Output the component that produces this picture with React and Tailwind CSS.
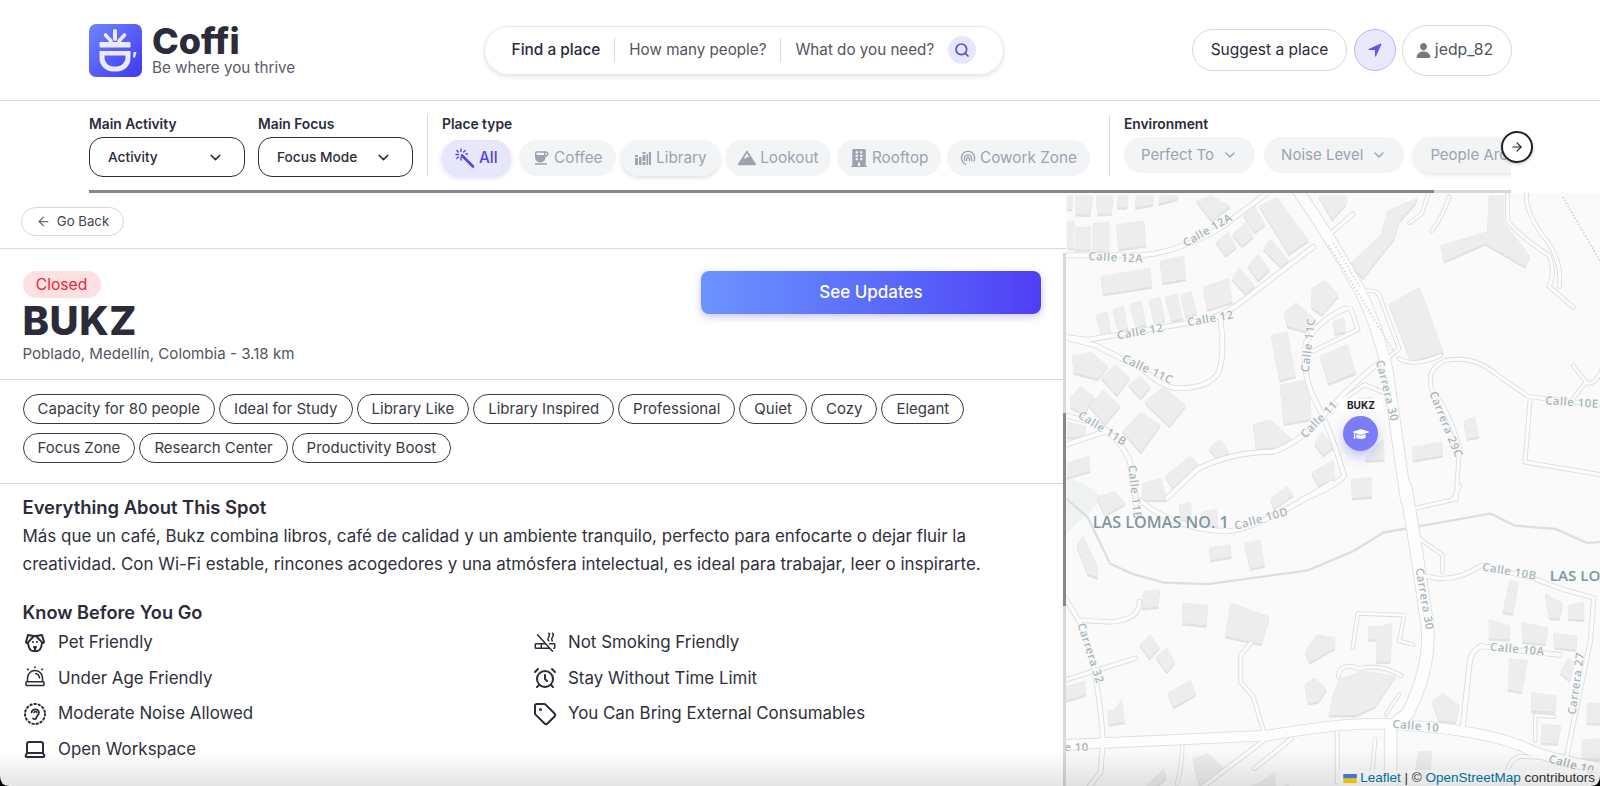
import React from 'react';
import { ChevronDown, ArrowRight, ArrowLeft, Search, Tag, AlarmClock, Laptop } from 'lucide-react';
import { IoNavigate, IoPerson } from 'react-icons/io5';
import { FaGraduationCap, FaBuilding, FaMountain } from 'react-icons/fa';
import { MdCoffee } from 'react-icons/md';
import { TbDog } from 'react-icons/tb';
import { PiSiren, PiCigaretteSlash } from 'react-icons/pi';

const tags = [
  ['Capacity for 80 people', 'Ideal for Study', 'Library Like', 'Library Inspired', 'Professional', 'Quiet', 'Cozy', 'Elegant'],
  ['Focus Zone', 'Research Center', 'Productivity Boost'],
];

// map geometry, in units of 2.904 per page pixel (see the viewBox). The second sets sit 859.6 lower.
const bldA = [
  '20,15 38,15 35,55 20,55', '45,15 95,15 88,72 45,70', '105,15 155,15 150,68 108,70', '168,15 198,15 195,50 165,50',
  '220,15 272,15 270,42 218,50', '288,15 345,15 340,25 285,40', '395,30 440,15 495,45 440,88', '20,90 42,88 40,170 20,165',
  '45,108 90,105 88,172 42,172', '95,95 143,92 143,175 92,178', '163,100 245,88 250,160 170,172', '290,205 360,190 366,258 298,270',
  '118,250 262,225 268,280 125,302', '452,150 490,122 513,165 480,190', '500,128 540,92 562,135 528,162', '532,70 565,45 596,100 565,122',
  '578,45 630,20 722,145 665,185', '590,170 610,140 665,205 640,222', '545,220 575,185 610,230 575,262', '498,258 520,225 566,275 540,302',
  '415,280 490,255 502,325 428,347', '350,305 382,292 398,358 365,368', '305,310 340,300 358,372 325,380', '258,318 292,310 305,378 275,388',
  '203,330 238,320 250,390 222,398', '153,345 185,335 198,400 170,410', '105,360 138,352 150,415 120,420', '750,15 835,15 830,40 790,85',
  '840,215 930,130 950,60 1040,20 1030,40 985,90 970,140 880,255', '1105,160 1240,120 1245,15 1290,15 1290,95 1365,190 1350,222 1235,155 1115,207',
  '955,330 1045,282 1115,470 1020,498', '730,285 770,260 810,305 760,362 730,340', '650,355 685,325 738,372 715,410 660,395',
  '792,380 825,370 830,410 798,418', '755,480 835,448 860,530 780,562', '612,420 660,410 685,540 638,552', '638,565 725,548 730,665 650,678',
  '35,480 90,470 140,510 110,548 40,530', '120,545 160,505 203,545 165,595', '198,565 232,538 262,570 235,605', '30,600 60,570 100,600 70,650 30,630',
  '85,625 125,580 175,625 130,680', '245,615 300,570 365,625 318,685', '180,700 235,645 292,680 235,760', '20,670 75,685 75,715 20,718',
  '20,790 85,772 88,815 20,835', '432,750 465,722 492,760 462,785', '560,680 610,665 672,720 655,745 570,752', '738,735 760,700 795,745 765,770',
  '730,820 795,782 800,840 750,858', '845,840 905,832 905,890 848,895', '305,830 378,770 405,800 330,868', '238,850 295,835 310,900 240,900',
  '1022,745 1110,730 1112,770 1025,785', '1172,670 1205,658 1218,715 1182,722', '865,605 905,600 905,630 865,632', '885,780 940,720 942,782 890,785',
];

const bldB = [
  '105,30 160,15 190,50 130,85', '345,55 380,45 385,100 350,100', '410,75 455,65 460,120 420,120', '610,35 660,0 678,25 620,65',
  '433,178 495,168 498,205 436,215', '535,165 582,155 595,230 552,240', '48,170 68,145 108,230 110,265 80,255', '240,305 290,298 285,350 238,355',
  '355,338 430,345 425,405 355,398', '495,338 608,378 585,458 478,435', '230,460 262,432 290,468 260,500', '278,495 310,468 335,510 310,540',
  '312,600 380,562 395,605 330,642', '18,580 72,565 76,605 18,622', '138,650 155,650 180,618 188,685 140,692', '712,480 745,430 800,440 798,470 725,512',
  '895,408 935,405 965,398 960,510 918,510 918,445 895,445', '710,575 740,555 775,590 750,625 720,630', '780,665 790,610 810,560 880,535 975,550 915,640 860,665',
  '1285,365 1305,272 1332,278 1315,370', '1408,310 1460,340 1450,385 1420,382', '1475,345 1522,335 1522,388 1475,385', '1245,385 1308,405 1305,445 1245,442',
  '1340,395 1418,410 1410,458 1342,452', '1432,425 1502,435 1498,475 1435,468', '1305,500 1358,505 1340,598 1300,590', '1452,540 1475,498 1495,510 1480,565',
  '1368,598 1442,608 1438,655 1368,652', '1398,690 1455,695 1445,748 1395,745', '1080,625 1110,600 1160,635 1150,685 1100,680', '1530,630 1620,628 1620,690 1530,688',
  '1515,735 1620,730 1620,795 1515,790', '1040,770 1080,768 1075,838 1030,835', '385,790 430,775 478,820 405,872', '240,880 300,820 310,845 250,900',
  '535,880 580,860 625,830 625,900 535,900', '655,860 685,890 685,900 655,900', '825,830 875,835 870,860 825,860',
];

const roadA = [
  ['M0 190 L230 190 Q300 185 360 160 Q430 135 480 100 L600 10', 12],
  ['M0 425 L80 435 L380 385 Q460 375 520 330 L735 165', 12],
  ['M465 370 Q480 480 460 530 Q430 580 330 575 Q280 560 240 520 L100 450 L0 425', 12],
  ['M0 650 L110 680 Q170 720 200 780 Q215 830 220 910', 12],
  ['M0 745 L135 700', 12],
  ['M850 70 L770 140', 10],
  ['M830 345 Q760 370 715 440 Q700 500 730 590 Q790 700 825 830 Q800 860 700 900', 12],
  ['M915 510 Q820 590 760 660 Q700 730 620 760 Q500 760 400 810 L310 895', 12],
  ['M730 470 L865 405', 9],
  ['M820 345 L845 345 L865 405', 9],
  ['M820 610 L885 565 L945 590', 9],
  ['M985 490 Q1030 515 1105 480', 9],
  ['M1150 900 L1160 750 Q1130 640 1080 580 Q1060 520 1120 495 Q1200 480 1260 530 L1360 600 L1620 630', 9],
  ['M1365 610 L1350 790 L1620 835', 9],
  ['M1300 0 L1300 90 Q1330 130 1420 190 Q1440 240 1420 280 L1490 340', 9],
  ['M1355 10 Q1350 60 1400 130 Q1460 200 1450 280', 9],
  ['M1490 510 L1530 560 Q1560 570 1580 500', 8],
  ['M1525 560 L1480 620', 8],
  ['M1070 10 L1050 70 L1015 95', 8],
  ['M1130 20 Q1110 80 1080 118', 8],
  ['M870 300 Q900 285 925 300 L985 460 L950 490', 8],
];

const roadB = [
  ['M230 40 L270 70 Q380 135 500 130 Q600 110 790 -10', 12],
  ['M1030 65 L1140 40 L1160 0', 9],
  ['M1040 150 L1110 200 L1110 250', 8],
  ['M1065 262 Q1140 285 1225 230 L1380 270 L1460 300 L1550 325 L1540 450 L1470 790', 10],
  ['M1450 490 L1220 465 Q1195 480 1190 510 L1170 695', 12],
  ['M0 300 L60 400 Q110 520 125 740 L118 830 L80 880', 11],
  ['M0 568 L220 500', 10],
  ['M590 708 L560 610 L525 570 L525 490 L555 455', 9],
  ['M670 735 L565 820', 10],
  ['M590 740 L400 885', 10],
  ['M355 755 Q355 810 340 865', 8],
  ['M805 715 L805 860', 9],
  ['M1380 740 L1380 665 L1435 670', 8],
  ['M915 735 L905 850', 8],
  ['M850 470 L865 370 L1000 375 L985 450 L1025 460', 8],
  ['M990 550 Q930 515 870 530 Q810 510 808 555', 9],
  ['M230 335 Q235 385 150 395 L60 390', 10],
  ['M1290 900 Q1290 790 1340 785 L1450 790', 9],
  ['M945 665 L985 605', 6],
];

const mainA = [['M690 0 Q780 130 870 290 Q920 390 950 520 L1005 900', 30]];
const mainB = [
  ['M1003 0 Q1030 150 1060 360 Q1090 500 1010 660 L960 700 L960 900', 34],
  ['M0 752 L600 725 Q800 690 920 690 Q1200 700 1340 755 Q1430 800 1620 825', 28],
];

const labelsA = [
  ['Calle 12A', 82, 203, 3], ['Calle 12A', 365, 166, -30], ['Calle 12', 168, 434, -10], ['Calle 12', 372, 396, -10],
  ['Calle 11C', 178, 497, 25], ['Calle 11C', 722, 530, -83], ['Carrera 30', 917, 497, 76], ['Carrera 29C', 1072, 590, 68],
  ['Calle 10E', 1408, 622, 4], ['Calle 11B', 50, 660, 32], ['Calle 11', 712, 722, -45], ['Calle 11B', 198, 800, 84],
];

const labelsB = [
  ['Calle 10D', 510, 128, -16], ['Carrera 30', 1032, 240, 80], ['Calle 10B', 1225, 245, 10], ['Carrera 32', 50, 402, 72],
  ['Calle 10A', 1248, 478, 5], ['Carrera 27', 1497, 665, -82], ['Calle 10', 965, 702, 5], ['Calle 10', -52, 770, 0], ['Calle 10', 1417, 802, 15],
];

const MapDrawing = () => {
  const polys = (list) => list.map((p) => (
    <g key={p}>
      <polygon points={p} fill="#e2e2e2" transform="translate(0 7)" />
      <polygon points={p} fill="#ededed" />
    </g>
  ));
  const roads = (list, extra, color) => list.map((r) => (
    <path key={r[0]} d={r[0]} fill="none" stroke={color} strokeWidth={r[1] + extra} strokeLinejoin="round" strokeLinecap="round" />
  ));
  const labels = (list) => list.map(([t, x, y, a]) => (
    <text
      key={t + x}
      x={x}
      y={y}
      transform={`rotate(${a} ${x} ${y})`}
      fontSize="33"
      fontFamily="'Open Sans', sans-serif"
      fontWeight="600"
      letterSpacing="1.5"
      fill="#a9b6bd"
      stroke="#fafafa"
      strokeWidth="5"
      paintOrder="stroke"
    >
      {t}
    </text>
  ));

  return (
    <svg viewBox="17.400 8.700 1550.600 1722" className="block h-full w-full">
      <rect x="0" y="0" width="1620" height="1800" fill="#fafafa" />
      <path d="M18 830 L100 870 L120 900 L18 1000 Z" fill="#f0f4f0" />
      {polys(bldA)}
      <g transform="translate(0 859.600)">{polys(bldB)}</g>
      <g transform="translate(0 -28.400)">
        <path
          d="M18 925 L80 978 L145 1113 L210 1143 L300 1168 L430 1173 L720 1133 L850 1078 L940 1023 L1250 968 L1320 1003 L1440 1013 L1530 1053 L1620 1048"
          fill="none"
          stroke="#d8e2e4"
          strokeWidth="7"
          strokeLinejoin="round"
        />
      </g>
      {roads(roadA, 5, '#dddddd')}
      <g transform="translate(0 859.600)">{roads(roadB, 5, '#dddddd')}</g>
      {roads(mainA, 5, '#dddddd')}
      <g transform="translate(0 859.600)">{roads(mainB, 5, '#dddddd')}</g>
      {roads(roadA, 0, '#fcfcfc')}
      <g transform="translate(0 859.600)">{roads(roadB, 0, '#fcfcfc')}</g>
      {roads(mainA, 0, '#fdfdfd')}
      <g transform="translate(0 859.600)">{roads(mainB, 0, '#fdfdfd')}</g>
      <path d="M780 160 L970 470" fill="none" stroke="#cfcfcf" strokeWidth="4" strokeDasharray="4 7" />
      <path d="M795 155 L870 280" fill="none" stroke="#cfcfcf" strokeWidth="4" strokeDasharray="4 7" />
      <path d="M1460 20 L1570 210" fill="none" stroke="#cfcfcf" strokeWidth="5" strokeDasharray="4 6" />
      {labels(labelsA)}
      <g transform="translate(0 859.600)">
        {labels(labelsB)}
        <text x="95" y="122" fontSize="47" fontFamily="'Open Sans', sans-serif" fontWeight="600" fill="#82959f" stroke="#fafafa" strokeWidth="4" paintOrder="stroke">LAS LOMAS NO. 1</text>
        <text x="1422" y="277" fontSize="44" fontFamily="'Open Sans', sans-serif" fontWeight="600" fill="#82959f" stroke="#fafafa" strokeWidth="4" paintOrder="stroke">LAS LOMAS</text>
      </g>
    </svg>
  );
};

const CoffiLogo = () => (
  <svg viewBox="0 0 53 53" className="h-[53px] w-[53px] shrink-0">
    <defs>
      <linearGradient id="logoFill" x1="0" y1="0" x2="1" y2="1">
        <stop offset="0" stopColor="#6f86ff" />
        <stop offset="1" stopColor="#3f37f2" />
      </linearGradient>
    </defs>
    <rect width="53" height="53" rx="7" fill="url(#logoFill)" />
    <g stroke="#eceaff" strokeLinecap="round" fill="none">
      <path d="M26 7 V15" strokeWidth="4" />
      <path d="M16.500 11 L22 17" strokeWidth="3.600" />
      <path d="M35.500 11 L30 17" strokeWidth="3.600" />
    </g>
    <rect x="10.500" y="18" width="31" height="5.500" rx="1" fill="#eceaff" />
    <path
      fillRule="evenodd"
      d="M10.500 27 H41.500 V34 C41.500 42 35 47.500 28 47.500 H24 C17 47.500 10.500 42 10.500 34 Z M15.500 31.500 V33.500 C15.500 38.500 20 42.500 24 42.500 H28 C32 42.500 36.500 38.500 36.500 33.500 V31.500 Z"
      fill="#eceaff"
    />
    <path d="M44.500 28 H47.500 L46 33.500 H44 Z" fill="#eceaff" />
  </svg>
);

const WandIcon = ({ className }) => (
  <svg viewBox="0 0 20 20" fill="none" stroke="currentColor" className={className}>
    <path d="M7 7.500 L18 18.500" strokeWidth="2.600" strokeLinecap="round" />
    <g strokeWidth="1.400" strokeLinecap="round">
      <path d="M6 1 V3.500" />
      <path d="M6 9.500 V12" />
      <path d="M1 6.500 H3.500" />
      <path d="M1.800 2.500 L3.300 4" />
      <path d="M10.200 2.500 L8.700 4" />
      <path d="M1.800 10.500 L3.300 9" />
      <path d="M11 6 H12.500" />
    </g>
  </svg>
);

const LibraryIcon = ({ className }) => (
  <svg viewBox="0 0 18 18" fill="currentColor" className={className}>
    <path d="M1 6 H4 V16 H1 Z M1 8 V9 H4 V8 Z" fillRule="evenodd" />
    <path d="M5 8 H7.500 V16 H5 Z" />
    <path d="M8.500 3 H11.500 V16 H8.500 Z M8.500 5 V6 H11.500 V5 Z M8.500 12 V13 H11.500 V12 Z" fillRule="evenodd" />
    <path d="M12.500 5 H14 V16 H12.500 Z" />
    <path d="M14.800 3 H17 V16 H14.800 Z" />
  </svg>
);

const CoworkIcon = ({ className }) => (
  <svg viewBox="0 0 18 18" fill="none" stroke="currentColor" strokeWidth="1.500" strokeLinecap="round" className={className}>
    <circle cx="9" cy="9" r="7.500" strokeDasharray="36 11" transform="rotate(110 9 9)" />
    <path d="M5 12 V9.500 A4 4 0 0 1 13 9.500 V12" />
    <path d="M7.500 12 V9.500 A1.500 1.500 0 0 1 10.500 9.500 V12" />
  </svg>
);

const EarDotsIcon = ({ className }) => (
  <svg viewBox="0 0 24 24" fill="none" stroke="currentColor" className={className}>
    <circle cx="12" cy="12" r="10" strokeWidth="2" strokeDasharray="1.500 2.700" strokeLinecap="round" />
    <path d="M8.500 10.500 A3.800 3.800 0 0 1 16 10.500 C16 13 13.500 13.500 13.500 15.500 A2 2 0 0 1 10 16.500" strokeWidth="1.700" strokeLinecap="round" />
    <path d="M11 10.500 A1.500 1.500 0 0 1 13.800 10.500" strokeWidth="1.500" strokeLinecap="round" />
  </svg>
);

const FlagIcon = () => (
  <svg viewBox="0 0 12 8" className="mr-[3px] inline-block h-[9px] w-[14px]">
    <rect width="12" height="4" fill="#4c7be1" />
    <rect y="4" width="12" height="4" fill="#ffd500" />
  </svg>
);

const PlaceChip = ({ icon: Icon, label, active, raised, iconSize = 'size-[18px]' }) => (
  <button
    className={`flex h-[36px] shrink-0 items-center gap-1 rounded-full px-[13px] text-[15.300px] ${
      active
        ? 'bg-[#e6e7fb] font-medium text-[#4f46e5] shadow-[0_2px_5px_rgba(79,70,229,0.2)]'
        : 'bg-[#f3f4f6] text-[#9ca3af]'
    } ${raised ? 'shadow-[0_2px_4px_rgba(0,0,0,0.12)]' : ''}`}
  >
    <Icon className={iconSize} />
    <span>{label}</span>
  </button>
);

const EnvChip = ({ label, raised }) => (
  <button
    className={`flex h-[36px] shrink-0 items-center gap-2 rounded-full bg-[#f3f4f6] px-[17px] text-[15px] text-[#9ca3af] ${
      raised ? 'shadow-[0_2px_4px_rgba(0,0,0,0.1)]' : ''
    }`}
  >
    <span>{label}</span>
    <ChevronDown className="size-4" />
  </button>
);

const SelectBox = ({ label, value, width }) => (
  <div className={`flex shrink-0 flex-col gap-[4px] ${width}`}>
    <span className="text-[13.800px] leading-[18px] font-semibold text-[#2b2b3a]">{label}</span>
    <button className="flex h-[40px] items-center justify-between rounded-[14px] border border-[#2b2b3a] pr-5 pl-[18px] text-[13.700px] font-medium text-[#2b2b3a]">
      <span>{value}</span>
      <ChevronDown className="size-[17px]" />
    </button>
  </div>
);

const Feature = ({ icon: Icon, label }) => (
  <div className="flex h-[35.500px] items-center gap-[11.500px] text-[16.900px] text-[#2f2f3d]">
    <Icon className="size-[24px] shrink-0 text-[#2b2b3a]" />
    <span>{label}</span>
  </div>
);

const App = () => {
  return (
    <div className="relative flex h-[786px] w-[1600px] flex-col overflow-hidden bg-white font-['Inter',sans-serif] text-[#2b2b3a]">
      {/* header */}
      <header className="flex h-[101px] shrink-0 items-center justify-between border-b border-[#dcdcdf] pr-[88px] pl-[89px]">
        <div className="flex items-center gap-[10px]">
          <CoffiLogo />
          <div className="flex flex-col pt-[2px]">
            <span className="text-[36px] leading-[34px] font-extrabold text-[#2b2b3a]">Coffi</span>
            <span className="text-[15.200px] leading-[20px] text-[#5b5b68]">Be where you thrive</span>
          </div>
        </div>

        <div className="flex h-[49px] w-[520px] items-center rounded-full border border-[#e6e6ea] pl-[27px] whitespace-nowrap shadow-[0_2px_5px_rgba(0,0,0,0.1)]">
          <span className="text-[15.400px] font-medium text-[#2b2b3a]">Find a place</span>
          <div className="mx-[14px] h-[24px] w-px shrink-0 bg-[#d9d9dd]" />
          <span className="text-[15.200px] text-[#55555f]">How many people?</span>
          <div className="mx-[14px] h-[24px] w-px shrink-0 bg-[#d9d9dd]" />
          <span className="text-[15.200px] text-[#55555f]">What do you need?</span>
          <div className="ml-[14px] flex size-[28px] shrink-0 items-center justify-center rounded-full bg-[#e6e7fb]">
            <Search strokeWidth={2.500} className="size-[16px] text-[#4f52d8]" />
          </div>
        </div>

        <div className="flex items-center gap-[6px]">
          <button className="mr-[1px] flex h-[42px] w-[155px] items-center justify-center rounded-full border border-[#d8d8dc] text-[15.500px] text-[#2b2b3a]">
            Suggest a place
          </button>
          <button className="flex h-[42px] w-[42px] items-center justify-center rounded-full border border-[#b4b8f5] bg-[#e8e9fc]">
            <IoNavigate className="size-[16px] text-[#5b57f0]" />
          </button>
          <button className="flex h-[51px] w-[110px] items-center justify-center gap-[3px] rounded-full border border-[#d8d8dc] pr-[6px] text-[15.800px] text-[#55555f]">
            <IoPerson className="size-[17px] text-[#77777f]" />
            jedp_82
          </button>
        </div>
      </header>

      {/* filter bar */}
      <div className="relative h-[92px] shrink-0 pl-[89px]">
        <div className="flex h-[89px] w-[1422px] items-start overflow-hidden pt-[14px]">
          <SelectBox label="Main Activity" value="Activity" width="w-[156px]" />
          <SelectBox label="Main Focus" value="Focus Mode" width="ml-[13px] w-[155px]" />
          <div className="mx-[14px] h-[61px] w-px shrink-0 bg-[#dcdcdf]" />
          <div className="flex shrink-0 flex-col gap-[7px]">
            <span className="text-[13.800px] leading-[18px] font-semibold text-[#2b2b3a]">Place type</span>
            <div className="flex gap-[5.500px]">
              <div className="mr-[3px]"><PlaceChip icon={WandIcon} label="All" active iconSize="size-[20px]" /></div>
              <PlaceChip icon={MdCoffee} label="Coffee" />
              <PlaceChip icon={LibraryIcon} label="Library" raised />
              <PlaceChip icon={FaMountain} label="Lookout" />
              <PlaceChip icon={FaBuilding} label="Rooftop" />
              <PlaceChip icon={CoworkIcon} label="Cowork Zone" iconSize="size-[16px]" />
            </div>
          </div>
          <div className="mr-[14px] ml-[19px] h-[61px] w-px shrink-0 bg-[#dcdcdf]" />
          <div className="flex shrink-0 flex-col gap-[4px]">
            <span className="text-[13.800px] leading-[18px] font-semibold text-[#2b2b3a]">Environment</span>
            <div className="flex gap-[9px]">
              <EnvChip label="Perfect To" />
              <EnvChip label="Noise Level" />
              <EnvChip label="People Around" raised />
            </div>
          </div>
        </div>
        {/* horizontal scrollbar */}
        <div className="h-[3px] w-[1422px] bg-[#d8d8d8]">
          <div className="h-[3px] w-[1345px] bg-[#868686]" />
        </div>
        <button className="absolute top-[30px] left-[1501px] flex size-[32px] items-center justify-center rounded-full border-2 border-[#1f1f28] bg-white shadow-[0_1px_3px_rgba(0,0,0,0.25)]">
          <ArrowRight className="size-[14px] text-[#1f1f28]" />
        </button>
      </div>

      {/* content */}
      <div className="flex min-h-0 flex-1">
        <main className="relative w-[1066px] shrink-0 overflow-hidden bg-white">
          <div className="flex h-[56px] items-center border-b border-[#d9d9dd] pt-[2px] pl-[21px]">
            <button className="flex h-[29px] w-[103px] items-center justify-center gap-[6px] rounded-full border border-[#d8d8dc] text-[13.200px] text-[#44444f]">
              <ArrowLeft className="size-[15px] text-[#6b6b75]" />
              Go Back
            </button>
          </div>

          <div className="flex h-[131px] items-start justify-between border-b border-[#d9d9dd] pt-[22px] pr-[25px] pl-[22.500px]">
            <div className="flex flex-col items-start">
              <span className="flex h-[27px] w-[78px] items-center justify-center rounded-full bg-[#fde0e2] pt-[1px] text-[15.600px] text-[#e5283d]">Closed</span>
              <h1 className="mt-[1px] text-[40px] leading-[44px] font-extrabold tracking-[0.500px] text-[#2b2b3a]">BUKZ</h1>
              <span className="mt-[1px] text-[15.100px] leading-[20px] text-[#55555f]">Poblado, Medellín, Colombia - 3.18 km</span>
            </div>
            <button className="flex h-[43px] w-[340px] items-center justify-center rounded-[8px] bg-gradient-to-r from-[#6d93ff] to-[#4f3df5] text-[17px] font-medium text-white shadow-[0_3px_8px_rgba(79,70,229,0.3)]">
              See Updates
            </button>
          </div>

          <div className="flex h-[104px] flex-col gap-[9px] border-b border-[#d9d9dd] pt-[14px] pl-[22.500px]">
            {tags.map((row) => (
              <div key={row[0]} className="flex gap-[4px]">
                {row.map((t) => (
                  <span key={t} className="flex h-[30px] items-center rounded-full border border-[#3a3a46] px-[14px] pt-[1px] text-[15px] text-[#3a3a46]">
                    {t}
                  </span>
                ))}
              </div>
            ))}
          </div>

          <section className="pt-[11px] pl-[22.500px]">
            <h2 className="text-[18.400px] leading-[24px] font-semibold text-[#2b2b3a]">Everything About This Spot</h2>
            <p className="mt-[3px] w-[1010px] text-[16.950px] leading-[28px] text-[#2f2f3d]">
              Más que un café, Bukz combina libros, café de calidad y un ambiente tranquilo, perfecto para enfocarte o dejar fluir la creatividad. Con Wi-Fi estable, rincones acogedores y una atmósfera intelectual, es ideal para trabajar, leer o inspirarte.
            </p>
            <h2 className="mt-[22px] text-[18.200px] leading-[24px] font-semibold text-[#2b2b3a]">Know Before You Go</h2>
            <div className="grid w-[1010px] grid-cols-[510px_1fr] pt-[1px]">
              <div className="flex flex-col">
                <Feature icon={TbDog} label="Pet Friendly" />
                <Feature icon={PiSiren} label="Under Age Friendly" />
                <Feature icon={EarDotsIcon} label="Moderate Noise Allowed" />
                <Feature icon={Laptop} label="Open Workspace" />
              </div>
              <div className="flex flex-col">
                <Feature icon={PiCigaretteSlash} label="Not Smoking Friendly" />
                <Feature icon={AlarmClock} label="Stay Without Time Limit" />
                <Feature icon={Tag} label="You Can Bring External Consumables" />
              </div>
            </div>
          </section>

          {/* vertical scrollbar of the panel */}
          <div className="absolute top-[60px] right-0 bottom-0 w-[3px] bg-[#d8d8d8]">
            <div className="mt-[160px] h-[193px] w-[3px] bg-[#868686]" />
          </div>
        </main>

        <aside className="relative min-w-0 flex-1">
          <MapDrawing />
          <div className="absolute top-[206px] left-[273px] bg-white/90 px-2 text-[10px] leading-[12px] font-bold text-[#1f1f28]">BUKZ</div>
          <div className="absolute top-[223px] left-[277px] flex size-[35px] items-center justify-center rounded-full bg-[#7b7cf6] shadow-[0_6px_12px_rgba(99,102,241,0.35)]">
            <FaGraduationCap className="size-[16px] text-white" />
          </div>
          <div className="absolute right-0 bottom-0 bg-white/70 pr-[5px] pl-[5px] font-['Liberation_Sans',sans-serif] text-[13.500px] leading-[16px] text-[#333333]">
            <FlagIcon />
            <span className="text-[#0078a8]">Leaflet</span> | © <span className="text-[#0078a8]">OpenStreetMap</span> contributors
          </div>
        </aside>
      </div>

      {/* soft fade along the bottom edge and the rounded window corners */}
      <div className="pointer-events-none absolute right-0 bottom-0 left-0 h-[36px] bg-gradient-to-b from-transparent to-black/10" />
      <svg viewBox="0 0 12 12" className="absolute bottom-0 left-0 size-[10px]">
        <path d="M0 0 Q0 12 12 12 H0 Z" fill="#000000" />
      </svg>
      <svg viewBox="0 0 12 12" className="absolute right-0 bottom-0 size-[10px]">
        <path d="M12 0 Q12 12 0 12 H12 Z" fill="#000000" />
      </svg>
    </div>
  );
};

export default App;
